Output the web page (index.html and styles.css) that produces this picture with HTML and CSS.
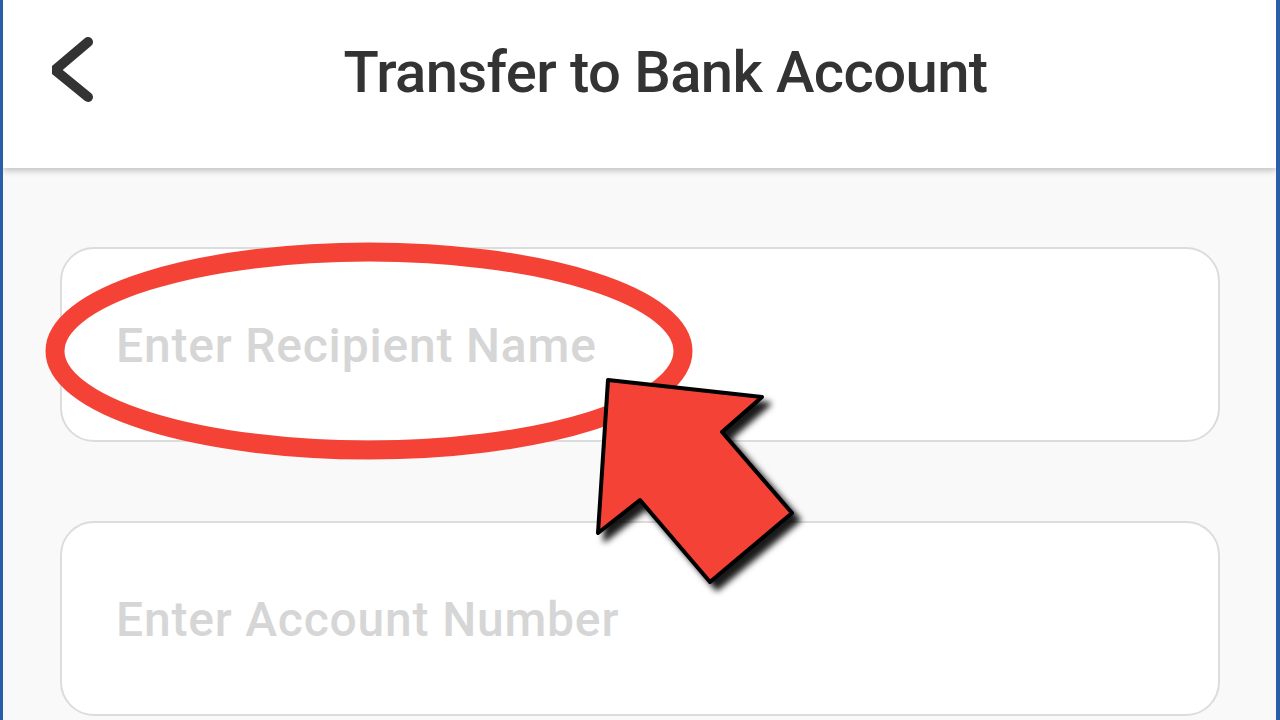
FILE: index.html
```html
<!DOCTYPE html>
<html lang="en">
<head>
<meta charset="utf-8">
<title>Transfer to Bank Account</title>
<link rel="stylesheet" href="styles.css">
</head>
<body>
<div class="screen">
  <header class="appbar">
    <button class="back" aria-label="Back">
      <svg width="60" height="80" viewBox="0 0 60 80">
        <polyline points="36,9 3,37 36,64" fill="none" stroke="#333" stroke-width="10" stroke-linecap="round" stroke-linejoin="round"/>
      </svg>
    </button>
    <h1 class="title">Transfer to Bank Account</h1>
  </header>
  <main class="form">
    <div class="field"><span class="placeholder">Enter Recipient Name</span></div>
    <div class="field"><span class="placeholder">Enter Account Number</span></div>
  </main>
  <svg class="annotation" width="1280" height="720" viewBox="0 0 1280 720">
    <ellipse cx="369" cy="351" rx="314" ry="99" fill="none" stroke="#f44336" stroke-width="19"/>
    <polygon class="arrow" points="608,380 762,397 722,432 792,513 710,582 640,500 598,533" fill="#f44336" stroke="#000" stroke-width="4" stroke-linejoin="round"/>
  </svg>
</div>
</body>
</html>
```
FILE: styles.css
```css
html, body {
  margin: 0;
  padding: 0;
  width: 1280px;
  height: 720px;
  overflow: hidden;
  background: #fafafa;
}
.screen {
  position: relative;
  width: 1280px;
  height: 720px;
  box-sizing: border-box;
  border-left: 3px solid #2b5ea8;
  border-right: 4px solid #2b5ea8;
  background: #f9f9f9;
  font-family: Roboto, "Liberation Sans", sans-serif;
  overflow: hidden;
}
.appbar {
  position: relative;
  height: 168px;
  background: #fff;
  box-shadow: 0 3px 6px rgba(0,0,0,0.22);
  display: flex;
  align-items: flex-start;
  z-index: 1;
}
.back {
  border: 0;
  background: none;
  padding: 0;
  margin: 33px 0 0 49px;
  width: 60px;
  height: 80px;
  display: flex;
}
.title {
  margin: 0;
  position: absolute;
  left: 0;
  right: 0;
  top: 36px;
  text-align: center;
  font-size: 58px;
  font-weight: 500;
  color: #333;
  line-height: 72px;
  padding-left: 52px;
  letter-spacing: -0.6px;
}
.form {
  display: flex;
  flex-direction: column;
  gap: 79px;
  padding: 79px 56px 0 57px;
}
.field {
  height: 195px;
  box-sizing: border-box;
  border: 2px solid #dcdcdc;
  border-radius: 34px;
  background: #fff;
  display: flex;
  align-items: center;
  padding-left: 54px;
}
.placeholder {
  font-size: 48px;
  font-weight: 500;
  color: #d6d6d6;
  line-height: 56px;
  margin-top: 2px;
  letter-spacing: 0.8px;
}
.annotation {
  position: absolute;
  left: -3px;
  top: 0;
  pointer-events: none;
  z-index: 2;
}
.arrow {
  filter: drop-shadow(7px 7px 3px rgba(0,0,0,0.9));
}
```
